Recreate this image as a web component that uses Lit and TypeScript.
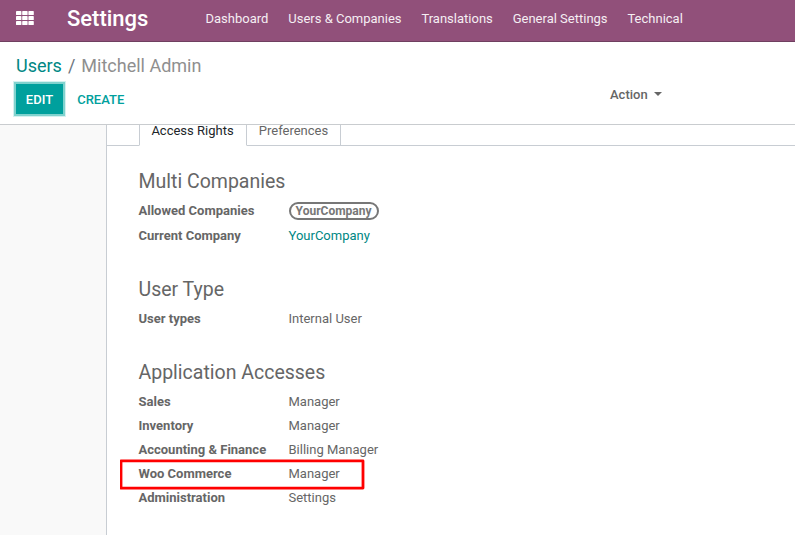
import { LitElement, html, css, nothing } from "lit";
import { customElement, property } from "lit/decorators.js";

interface Field {
  label: string;
  value: string;
  kind?: "text" | "link" | "tag";
  marked?: boolean;
}

interface Group {
  title: string;
  fields: Field[];
}

const MENU = ["Dashboard", "Users & Companies", "Translations", "General Settings", "Technical"];

const GROUPS: Group[] = [
  {
    title: "Multi Companies",
    fields: [
      { label: "Allowed Companies", value: "YourCompany", kind: "tag" },
      { label: "Current Company", value: "YourCompany", kind: "link" },
    ],
  },
  { title: "User Type", fields: [{ label: "User types", value: "Internal User" }] },
  {
    title: "Application Accesses",
    fields: [
      { label: "Sales", value: "Manager" },
      { label: "Inventory", value: "Manager" },
      { label: "Accounting & Finance", value: "Billing Manager" },
      { label: "Woo Commerce", value: "Manager", marked: true },
      { label: "Administration", value: "Settings" },
    ],
  },
];

@customElement("top-nav")
export class TopNav extends LitElement {
  static styles = css`
    :host {
      display: flex;
      align-items: center;
      box-sizing: border-box;
      height: 42px;
      padding: 0 0 4px 16px;
      background: #91507a;
      border-bottom: 1px solid #6f3f60;
      color: #fff;
      flex: none;
    }
    .apps {
      width: 18px;
      height: 14px;
      margin: -1px 33px 0 0;
      fill: #fff;
    }
    .brand {
      width: 138.5px;
      font-size: 22px;
      font-weight: 500;
      line-height: 26px;
    }
    .menu {
      display: flex;
      gap: 19.9px;
      line-height: 18px;
      color: #f5eef3;
      white-space: nowrap;
    }
  `;

  render() {
    return html`
      <svg class="apps" viewBox="0 0 18 14">
        ${[0, 5, 10].map((y) =>
          [0, 6.2, 12.4].map(
            (x) => html`<svg><rect x=${x} y=${y} width="5.4" height="4.1" rx="0.7"></rect></svg>`
          )
        )}
      </svg>
      <div class="brand">Settings</div>
      <nav class="menu">${MENU.map((m) => html`<span>${m}</span>`)}</nav>
    `;
  }
}

@customElement("control-panel")
export class ControlPanel extends LitElement {
  static styles = css`
    :host {
      display: block;
      box-sizing: border-box;
      height: 83px;
      padding: 12px 15px 0 14px;
      background: #fff;
      border-bottom: 1px solid #c9cccf;
      flex: none;
    }
    .crumbs {
      display: flex;
      padding-left: 2px;
      font-size: 18px;
      line-height: 24px;
      color: #8f8f8f;
    }
    .crumbs .link {
      color: #008784;
    }
    .crumbs .sep {
      padding: 0 6px;
      color: #6c757d;
    }
    .bar {
      display: flex;
      margin-top: 4px;
    }
    .buttons {
      display: flex;
      width: 596px;
      align-items: center;
      font-weight: 500;
    }
    .edit {
      box-sizing: border-box;
      width: 51px;
      height: 34px;
      border: 2px solid #80d2ce;
      background: #00a09d;
      color: #fff;
      line-height: 31px;
      text-align: center;
      box-shadow: 0 0 0 1px #d5f1f0;
    }
    .create {
      margin-left: 12.2px;
      color: #00a09d;
    }
    .action {
      display: flex;
      align-items: center;
      height: 24px;
      font-weight: 500;
      color: #666;
    }
    .caret {
      margin: -1px 0 0 6.4px;
      border: 4px solid transparent;
      border-top-color: #666;
      border-bottom: 0;
    }
  `;

  render() {
    return html`
      <div class="crumbs">
        <span class="link">Users</span><span class="sep">/</span><span>Mitchell Admin</span>
      </div>
      <div class="bar">
        <div class="buttons">
          <div class="edit">EDIT</div>
          <div class="create">CREATE</div>
        </div>
        <div class="action">Action<span class="caret"></span></div>
      </div>
    `;
  }
}

@customElement("field-group")
export class FieldGroup extends LitElement {
  @property({ attribute: false }) group!: Group;

  static styles = css`
    :host {
      display: block;
    }
    .title {
      margin-bottom: 5px;
      padding-top: 1px;
      font-size: 19.5px;
      line-height: 24px;
    }
    .row {
      position: relative;
      display: grid;
      grid-template-columns: 150px auto;
      height: 24px;
      line-height: 24px;
    }
    .row.tall {
      height: 25px;
    }
    .label {
      font-weight: 700;
      white-space: nowrap;
    }
    .link {
      color: #008784;
    }
    .tag {
      display: flex;
      align-items: center;
      height: 24px;
    }
    .pill {
      box-sizing: border-box;
      height: 18px;
      padding: 0 5.4px 0 5.1px;
      border: 2px solid #777;
      border-radius: 9px;
      font-size: 12px;
      font-weight: 700;
      line-height: 14px;
      color: #777;
    }
    .mark {
      position: absolute;
      left: -19px;
      top: -3px;
      width: 246px;
      height: 31px;
      fill: none;
      stroke: #f00;
      stroke-width: 2.8;
      stroke-linejoin: round;
    }
  `;

  private value(f: Field) {
    if (f.kind === "tag") return html`<span class="tag"><span class="pill">${f.value}</span></span>`;
    return html`<span class=${f.kind === "link" ? "link" : "text"}>${f.value}</span>`;
  }

  render() {
    return html`
      <div class="title">${this.group.title}</div>
      ${this.group.fields.map(
        (f) => html`
          <div class="row ${f.kind === "tag" ? "tall" : ""}">
            <span class="label">${f.label}</span>${this.value(f)}
            ${f.marked
              ? html`<svg class="mark" viewBox="0 0 246 31">
                  <rect x="1" y="1.9" width="242" height="27.2"></rect>
                </svg>`
              : nothing}
          </div>
        `
      )}
    `;
  }
}

@customElement("app-root")
export class AppRoot extends LitElement {
  static styles = css`
    :host {
      display: flex;
      flex-direction: column;
      height: 535px;
      overflow: hidden;
      background: #f9f9f9;
      font-family: Roboto, "Liberation Sans", sans-serif;
      font-size: 13px;
      color: #666;
    }
    .content {
      flex: 1;
      min-height: 0;
      display: flex;
    }
    .sheet {
      flex: 1;
      margin-left: 106px;
      border-left: 1px solid #c8cdd3;
      background: #fff;
    }
    .tabs {
      display: grid;
      grid-template-columns: 32px 108px 94px 1fr;
      height: 21px;
      line-height: 12px;
    }
    .cell {
      border-bottom: 1px solid #c8cdd3;
      border-right: 1px solid #c8cdd3;
      box-sizing: border-box;
      height: 21px;
      text-align: center;
      white-space: nowrap;
    }
    .gap {
      border-right: 0;
    }
    .active {
      padding-right: 1px;
      border-left: 1px solid #c8cdd3;
      border-bottom-color: transparent;
      color: #212529;
    }
    .groups {
      display: flex;
      flex-direction: column;
      gap: 29px;
      padding: 23px 0 0 31.5px;
    }
  `;

  render() {
    return html`
      <top-nav></top-nav>
      <control-panel></control-panel>
      <main class="content">
        <section class="sheet">
          <div class="tabs">
            <span class="cell gap"></span>
            <span class="cell active">Access Rights</span>
            <span class="cell">Preferences</span>
            <span class="cell gap"></span>
          </div>
          <div class="groups">
            ${GROUPS.map((g) => html`<field-group .group=${g}></field-group>`)}
          </div>
        </section>
      </main>
    `;
  }
}
